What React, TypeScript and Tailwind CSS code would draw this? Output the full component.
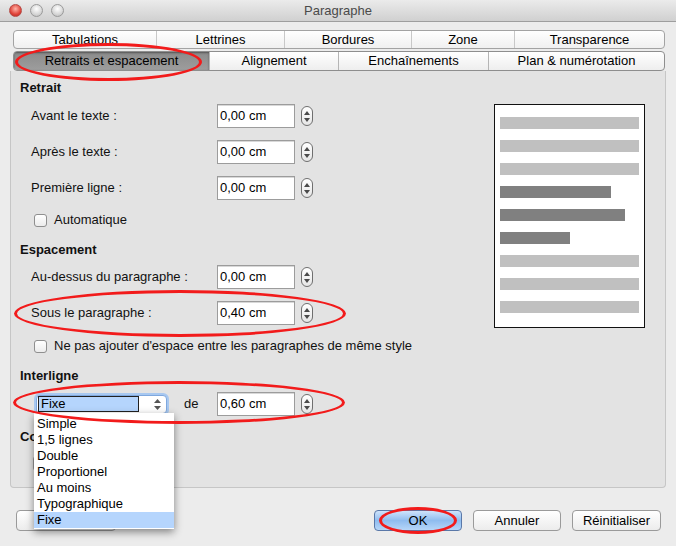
import React from "react";

const font = { fontFamily: '"Liberation Sans", Arial, sans-serif' };

const Spinner = () => (
  <div className="ml-[6px] flex h-[20px] w-[12px] flex-col items-center justify-center gap-[3px] rounded-[6px] border border-[#6f6f6f] bg-gradient-to-b from-white to-[#e6e6e6]">
    <svg width="6" height="4" viewBox="0 0 6 4">
      <path d="M3 0 L6 4 L0 4 Z" fill="#4a4a4a" />
    </svg>
    <svg width="6" height="4" viewBox="0 0 6 4">
      <path d="M0 0 L6 0 L3 4 Z" fill="#4a4a4a" />
    </svg>
  </div>
);

const Field = ({ value }: { value: string }) => (
  <div className="flex items-center">
    <div className="flex h-[24px] w-[78px] items-center border border-[#9c9c9c] bg-white pl-[2px] text-[13px] text-black shadow-[inset_0_1px_0_#d8d8d8]">
      {value}
    </div>
    <Spinner />
  </div>
);

const Row = ({ label, value, mt }: { label: string; value: string; mt: string }) => (
  <div className={`flex h-[24px] items-center pl-[20px] ${mt}`}>
    <div className="w-[186px] text-[13px] text-[#111]">{label}</div>
    <Field value={value} />
  </div>
);

const Checkbox = ({ label, mt }: { label: string; mt: string }) => (
  <div className={`flex h-[16px] items-center pl-[23px] ${mt}`}>
    <div className="h-[13px] w-[13px] rounded-[3px] border border-[#8f8f8f] bg-gradient-to-b from-white to-[#ececec]" />
    <span className="ml-[7px] text-[13px] text-[#111]">{label}</span>
  </div>
);

const Heading = ({ children, mt }: { children: React.ReactNode; mt: string }) => (
  <div className={`h-[16px] pl-[9px] text-[13px] font-bold leading-[16px] text-[#111] ${mt}`}>{children}</div>
);

const Btn = ({ children, w, blue }: { children?: React.ReactNode; w: string; blue?: boolean }) => (
  <div
    className={`flex h-[21px] items-center justify-center rounded-[4px] border text-[13px] text-black ${w} ${
      blue
        ? "border-[#5a78a8] bg-gradient-to-b from-[#cfe3fb] via-[#8fbcef] to-[#b6d6f8]"
        : "border-[#9a9a9a] bg-gradient-to-b from-white to-[#ececec]"
    }`}
  >
    {children}
  </div>
);

const tabs1 = [
  { t: "Tabulations", w: "w-[142px]" },
  { t: "Lettrines", w: "w-[128px]" },
  { t: "Bordures", w: "w-[127px]" },
  { t: "Zone", w: "w-[103px]" },
  { t: "Transparence", w: "flex-1" },
];
const tabs2 = [
  { t: "Retraits et espacement", w: "w-[195px]", sel: true },
  { t: "Alignement", w: "w-[129px]" },
  { t: "Enchaînements", w: "w-[150px]" },
  { t: "Plan & numérotation", w: "flex-1" },
];

const bars = [
  { w: "w-full", c: "bg-[#c0c0c0]" },
  { w: "w-full", c: "bg-[#c0c0c0]" },
  { w: "w-full", c: "bg-[#c0c0c0]" },
  { w: "w-[111px]", c: "bg-[#808080]" },
  { w: "w-[125px]", c: "bg-[#808080]" },
  { w: "w-[70px]", c: "bg-[#808080]" },
  { w: "w-full", c: "bg-[#c0c0c0]" },
  { w: "w-full", c: "bg-[#c0c0c0]" },
  { w: "w-full", c: "bg-[#c0c0c0]" },
];

const options = ["Simple", "1,5 lignes", "Double", "Proportionel", "Au moins", "Typographique", "Fixe"];

export default function App() {
  return (
    <div style={font} className="relative flex h-[546px] w-[676px] flex-col overflow-hidden bg-[#ececec]">
      {/* title bar */}
      <div className="relative flex h-[22px] items-center justify-center border-b border-[#9e9e9e] bg-gradient-to-b from-[#ebebeb] to-[#d0d0d0]">
        <div className="absolute left-[9px] top-[4px] flex gap-[8px]">
          <div className="h-[13px] w-[13px] rounded-full border border-[#b54a45] bg-[radial-gradient(circle_at_50%_35%,#ffb4a8,#e0443a_60%,#b0221c)]" />
          <div className="h-[13px] w-[13px] rounded-full border border-[#9a9a9a] bg-[radial-gradient(circle_at_50%_35%,#ffffff,#d6d6d6_60%,#b8b8b8)]" />
          <div className="h-[13px] w-[13px] rounded-full border border-[#9a9a9a] bg-[radial-gradient(circle_at_50%_35%,#ffffff,#d6d6d6_60%,#b8b8b8)]" />
        </div>
        <span className="text-[13px] text-[#4a4a4a]">Paragraphe</span>
      </div>

      {/* tabs */}
      <div className="flex flex-col gap-[2px] pl-[13px] pr-[11px] pt-[8px]">
        <div className="flex h-[19px] overflow-hidden rounded-[4px] border border-[#a3a3a3] bg-gradient-to-b from-white to-[#f0f0f0]">
          {tabs1.map((t, i) => (
            <div
              key={t.t}
              className={`flex items-center justify-center text-[13px] text-black ${t.w} ${i > 0 ? "border-l border-[#c8c8c8]" : ""}`}
            >
              {t.t}
            </div>
          ))}
        </div>
        <div className="flex h-[20px] overflow-hidden rounded-[4px] border border-[#8e8e8e] bg-gradient-to-b from-white to-[#eeeeee]">
          {tabs2.map((t, i) => (
            <div
              key={t.t}
              className={`flex items-center justify-center text-[13px] text-black ${t.w} ${
                i > 0 ? "border-l border-[#b5b5b5]" : ""
              } ${t.sel ? "bg-gradient-to-b from-[#8b8b8b] to-[#9d9d9d] shadow-[inset_0_1px_2px_#555]" : ""}`}
            >
              {t.t}
            </div>
          ))}
        </div>
      </div>

      {/* panel */}
      <div className="mx-[10px] flex h-[417px] rounded-b-[4px] border-x border-b border-[#c6c6c6] bg-[#e3e3e3] pt-[9px]">
        <div className="flex flex-1 flex-col">
          <Heading mt="mt-0">Retrait</Heading>
          <Row label="Avant le texte :" value="0,00 cm" mt="mt-[8px]" />
          <Row label="Après le texte :" value="0,00 cm" mt="mt-[12px]" />
          <Row label="Première ligne :" value="0,00 cm" mt="mt-[12px]" />
          <Checkbox label="Automatique" mt="mt-[12px]" />
          <Heading mt="mt-[14px]">Espacement</Heading>
          <Row label="Au-dessus du paragraphe :" value="0,00 cm" mt="mt-[7px]" />
          <Row label="Sous le paragraphe :" value="0,40 cm" mt="mt-[12px]" />
          <Checkbox label="Ne pas ajouter d'espace entre les paragraphes de même style" mt="mt-[13px]" />
          <Heading mt="mt-[14px]">Interligne</Heading>
          <div className="mt-[8px] flex h-[24px] items-center pl-[25px]">
            <div className="flex h-[19px] w-[131px] items-center rounded-[4px] border border-[#7fa8de] bg-white px-[1px] shadow-[0_0_0_2px_#a8c8f0]">
              <div className="flex h-[16px] w-[101px] items-center border border-[#222] bg-[#b5d5fd] pl-[2px] text-[13px] text-black">
                Fixe
              </div>
              <svg className="ml-[15px]" width="7" height="11" viewBox="0 0 7 11">
                <path d="M3.5 0 L7 4 L0 4 Z" fill="#555" />
                <path d="M0 7 L7 7 L3.5 11 Z" fill="#555" />
              </svg>
            </div>
            <span className="ml-[17px] w-[33px] text-[13px] text-[#111]">de</span>
            <Field value="0,60 cm" />
          </div>
          <Heading mt="mt-[13px]">Co</Heading>
          <div className="ml-[22px] mt-[11px] h-[15px] w-[40px] rounded-[3px] border border-[#9a9a9a] bg-gradient-to-b from-white to-[#ececec]" />
        </div>
        <div className="mr-[20px] mt-[24px] flex h-[224px] w-[151px] flex-col gap-[11px] border border-[#111] bg-white px-[5px] pt-[12px]">
          {bars.map((b, i) => (
            <div key={i} className={`h-[12px] shrink-0 ${b.w} ${b.c}`} />
          ))}
        </div>
      </div>

      {/* buttons */}
      <div className="mt-[22px] flex items-center pl-[16px] pr-[15px]">
        <Btn w="w-[100px]" />
        <div className="flex-1" />
        <Btn w="w-[88px]" blue>
          OK
        </Btn>
        <div className="w-[11px]" />
        <Btn w="w-[88px]">Annuler</Btn>
        <div className="w-[11px]" />
        <Btn w="w-[89px]">Réinitialiser</Btn>
      </div>

      {/* open popup list */}
      <div className="absolute left-[34px] top-[413px] w-[140px] bg-white pt-[3px] shadow-[0_3px_8px_rgba(0,0,0,0.45)]">
        {options.map((o) => (
          <div
            key={o}
            className={`flex h-[16px] items-center pl-[3px] text-[13px] text-black ${o === "Fixe" ? "bg-[#b5d5fd]" : ""}`}
          >
            {o}
          </div>
        ))}
        <div className="h-[1px]" />
      </div>

      {/* red annotation ellipses */}
      <div className="pointer-events-none absolute left-[15px] top-[43px] h-[38px] w-[187px] rounded-[50%] border-[3px] border-[#f21b1b]" />
      <div className="pointer-events-none absolute left-[14px] top-[290px] h-[47px] w-[332px] rounded-[50%] border-[3px] border-[#f21b1b]" />
      <div className="pointer-events-none absolute left-[13px] top-[381px] h-[43px] w-[332px] rounded-[50%] border-[3px] border-[#f21b1b]" />
      <div className="pointer-events-none absolute left-[379px] top-[507px] h-[27px] w-[78px] rounded-[50%] border-[3px] border-[#f21b1b]" />
    </div>
  );
}
